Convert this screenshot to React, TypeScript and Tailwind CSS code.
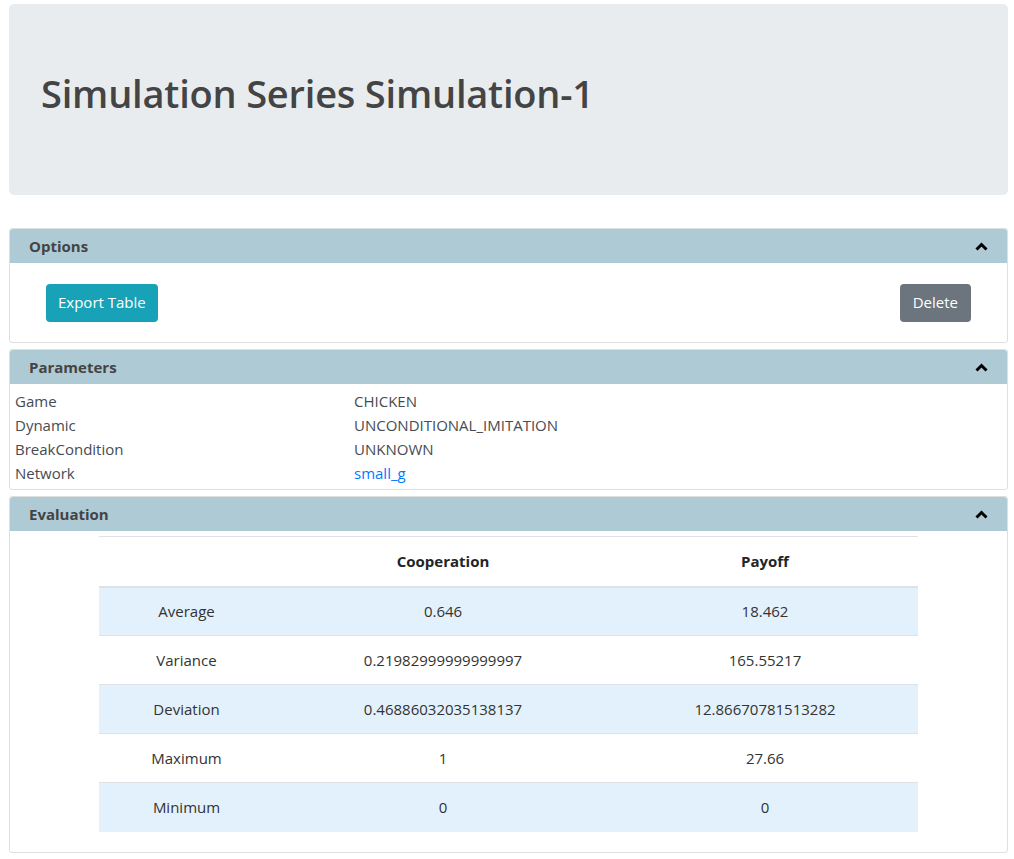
import { ReactNode } from 'react';

const Chevron = () => (
  <svg width="13" height="9" viewBox="0 0 13 9" className="block">
    <polyline points="1.5,7.5 6.5,2.5 11.5,7.5" fill="none" stroke="#000" strokeWidth="3" />
  </svg>
);

type CardProps = {
  title: string;
  children: ReactNode;
  bodyClass?: string;
};

const Card = ({ title, children, bodyClass }: CardProps) => {
  return (
    <div className="border border-[#dfdfdf] rounded-[3px] bg-white mb-[6px]">
      <div className="flex flex-row items-center justify-between h-[34px] pl-[19px] pr-[19px] bg-[#aecad4] rounded-t-[3px]">
        <span className="text-[15px] font-bold text-[#444]">{title}</span>
        <Chevron />
      </div>
      <div className={bodyClass}>{children}</div>
    </div>
  );
};

const params = [
  { name: 'Game', value: 'CHICKEN' },
  { name: 'Dynamic', value: 'UNCONDITIONAL_IMITATION' },
  { name: 'BreakCondition', value: 'UNKNOWN' },
  { name: 'Network', value: 'small_g', link: true },
];

const rows = [
  { name: 'Average', coop: '0.646', payoff: '18.462' },
  { name: 'Variance', coop: '0.21982999999999997', payoff: '165.55217' },
  { name: 'Deviation', coop: '0.46886032035138137', payoff: '12.86670781513282' },
  { name: 'Maximum', coop: '1', payoff: '27.66' },
  { name: 'Minimum', coop: '0', payoff: '0' },
];

const App = () => {
  return (
    <div className="w-[1014px] min-h-[859px] bg-white pl-[9px] pr-[6px] pt-[4px] text-[#454c53] font-['Open_Sans',sans-serif] text-[15px] overflow-hidden">
      <div className="h-[191px] bg-[#e9ecef] rounded-[5px] flex items-center px-[32px] mb-[33px]">
        <h1 className="text-[38px] font-semibold text-[#444] leading-none tracking-[-0.2px] pb-[14px]">
          Simulation Series Simulation-1
        </h1>
      </div>

      <Card title="Options" bodyClass="flex flex-row items-center justify-between h-[79px] px-[36px]">
        <button className="h-[38px] px-[12px] rounded-[4px] bg-[#17a2b8] text-white text-[15px]">
          Export Table
        </button>
        <button className="h-[38px] px-[13px] rounded-[4px] bg-[#6c757d] text-white text-[15px]">
          Delete
        </button>
      </Card>

      <Card title="Parameters" bodyClass="pt-[5px] pb-[4px] px-[5px]">
        {params.map((p) => (
          <div key={p.name} className="flex flex-row h-[24px] items-center">
            <div className="w-[339px]">{p.name}</div>
            <div className={p.link ? 'text-[#007bff]' : ''}>{p.value}</div>
          </div>
        ))}
      </Card>

      <Card title="Evaluation" bodyClass="pt-[5px] pb-[20px] px-[89px]">
        <table className="w-[819px] text-center border-t border-[#dee2e6]">
          <thead>
            <tr className="h-[50px] border-b-2 border-[#dee2e6]">
              <th className="w-[175px]"></th>
              <th className="w-[338px] font-bold text-[#212529]">Cooperation</th>
              <th className="font-bold text-[#212529]">Payoff</th>
            </tr>
          </thead>
          <tbody>
            {rows.map((r, i) => (
              <tr
                key={r.name}
                className={
                  i % 2 === 0
                    ? 'h-[49px] bg-[#e3f1fc] border-t border-[#dee2e6] text-[#333]'
                    : 'h-[49px] bg-white border-t border-[#dee2e6] text-[#333]'
                }
              >
                <td>{r.name}</td>
                <td>{r.coop}</td>
                <td>{r.payoff}</td>
              </tr>
            ))}
          </tbody>
        </table>
      </Card>

      <div className="h-[34px] bg-[#aecad4] rounded-t-[3px]"></div>
    </div>
  );
};

export default App;
